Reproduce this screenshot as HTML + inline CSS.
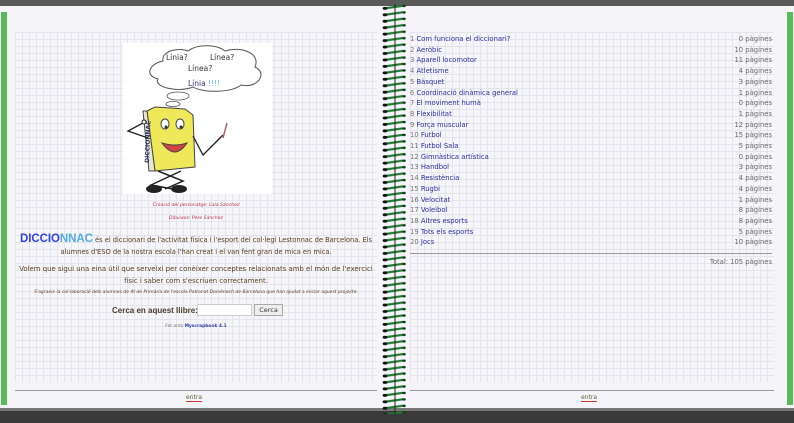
<!DOCTYPE html>
<html><head><meta charset="utf-8"><style>
*{margin:0;padding:0;box-sizing:border-box}
body{width:794px;height:423px;overflow:hidden;background:#f5f5f9;position:relative;font-family:"DejaVu Sans","Liberation Sans",sans-serif}
.abs{position:absolute}
.grid{background-color:#f6f6fa;background-image:linear-gradient(#e4e4ec 1px,transparent 1px),linear-gradient(90deg,#e4e4ec 1px,transparent 1px);background-size:7px 7px}
.row{position:absolute;left:410px;width:362px;font-size:6.8px;height:10px;line-height:10px}
.row a{color:#2e2e9a;text-decoration:none}
.row span.n{color:#777}
.row .p{position:absolute;right:0;color:#6a6a6a}
</style></head><body>
<div class="abs" style="left:0;top:0;width:794px;height:6px;background:#5a5a5a"></div>
<div class="abs" style="left:0;top:410px;width:794px;height:13px;background:#3a3a3a"></div>
<div class="abs" style="left:0;top:408px;width:794px;height:3px;background:#777"></div>
<div class="abs" style="left:1px;top:12px;width:6px;height:393px;background:#5cb85c"></div>
<div class="abs" style="left:787px;top:12px;width:6px;height:393px;background:#5cb85c"></div>
<div class="abs grid" style="left:15px;top:32px;width:362px;height:350px"></div>
<div class="abs grid" style="left:410px;top:32px;width:364px;height:350px"></div>
<div class="abs" style="left:15px;top:390px;width:362px;height:1px;background:#999"></div>
<div class="abs" style="left:410px;top:390px;width:364px;height:1px;background:#999"></div>
<div class="abs" style="left:186px;top:394px;font-size:6px;color:#5a5a30;border-bottom:1px solid #c33">entra</div>
<div class="abs" style="left:581px;top:394px;font-size:6px;color:#5a5a30;border-bottom:1px solid #c33">entra</div>

<!-- image -->
<div class="abs" style="left:123px;top:43px;width:149px;height:151px;background:#fff;overflow:hidden">
<svg width="149" height="151" viewBox="0 0 149 151">
<path d="M40 18 C38 8 55 4 65 8 C75 0 95 2 102 8 C118 3 138 10 132 24 C145 30 135 46 118 42 C108 50 80 50 70 44 C55 50 30 44 35 36 C20 32 28 20 40 18Z" fill="#fff" stroke="#555" stroke-width="1"/>
<ellipse cx="55" cy="53" rx="11" ry="4" fill="#fff" stroke="#555" stroke-width="0.8"/>
<ellipse cx="50" cy="61" rx="7" ry="2.6" fill="#fff" stroke="#555" stroke-width="0.8"/>
<text x="43" y="17" font-size="7.5" fill="#333" font-family="DejaVu Sans">Línia?</text>
<text x="87" y="17" font-size="7.5" fill="#333" font-family="DejaVu Sans">Línea?</text>
<text x="65" y="28" font-size="7.5" fill="#333" font-family="DejaVu Sans">Línea?</text>
<text x="65" y="43" font-size="7.5" fill="#336" font-family="DejaVu Sans">Línia <tspan fill="#6bc">!!!!</tspan></text>
<path d="M24 68 L32 64 L62 66 L70 72 L72 124 L32 128Z" fill="#eee85a" stroke="#444"/>
<path d="M20 68 L24 68 L32 128 L26 128Z" fill="#e8e8d0" stroke="#444"/>
<text x="26" y="120" font-size="6" fill="#336" transform="rotate(-88 26 120)" font-family="DejaVu Sans" font-weight="bold">DICCIONNAC</text>
<ellipse cx="42" cy="81" rx="4" ry="5" fill="#fff" stroke="#444"/><ellipse cx="57" cy="81" rx="4" ry="5" fill="#fff" stroke="#444"/>
<circle cx="43" cy="84" r="1.5" fill="#333"/><circle cx="58" cy="84" r="1.5" fill="#333"/>
<path d="M39 100 Q52 118 64 100 Q52 104 39 100Z" fill="#c44" stroke="#444"/>
<path d="M20 80 L5 88 L25 95" fill="none" stroke="#222" stroke-width="1.3"/>
<circle cx="21" cy="79" r="2" fill="#fff" stroke="#222"/>
<path d="M70 93 L80 112 L100 92" fill="none" stroke="#222" stroke-width="1.3"/>
<path d="M104 80 L100 95" stroke="#a66" stroke-width="1.5"/>
<path d="M35 128 L60 138 L42 146 M58 128 L28 142 L50 146" fill="none" stroke="#222" stroke-width="1.5"/>
<ellipse cx="31" cy="146" rx="8" ry="4" fill="#222"/><ellipse cx="56" cy="146" rx="8" ry="4" fill="#222"/>
</svg></div>
<div class="abs" style="left:15px;top:203px;width:362px;text-align:center;font-size:4.6px;color:#b03050;font-style:italic">Creació del personatge: Laia Sánchez</div>
<div class="abs" style="left:15px;top:216px;width:362px;text-align:center;font-size:4.6px;color:#b03050;font-style:italic">Dibuixos: Pere Sánchez</div>
<div class="abs" style="left:13px;top:233px;width:366px;text-align:center;font-size:6.75px;color:#5a4020;line-height:12px;letter-spacing:-0.05px"><b style="font-size:11.5px;color:#3344cc;font-family:'Liberation Sans',sans-serif">DICCIO<span style="color:#55aadd">NNAC</span></b> és el diccionari de l'activitat física i l'esport del col·legi Lestonnac de Barcelona. Els alumnes d'ESO de la nostra escola l'han creat i el van fent gran de mica en mica.</div>
<div class="abs" style="left:13px;top:263px;width:366px;text-align:center;font-size:6.9px;color:#5a4020;line-height:12px">Volem que sigui una eina útil que serveixi per conèixer conceptes relacionats amb el món de l'exercici físic i saber com s'escriuen correctament.</div>
<div class="abs" style="left:15px;top:290px;width:362px;text-align:center;font-size:4.5px;color:#5a4020;font-style:italic">S'agraeix la col·laboració dels alumnes de 4t de Primària de l'escola Patronat Domènech de Barcelona que han ajudat a iniciar aquest projecte.</div>
<div class="abs" style="left:112px;top:305px;font-size:8px;font-weight:bold;color:#4a3a2a;font-family:'Liberation Sans',sans-serif;line-height:12px">Cerca en aquest llibre:</div>
<div class="abs" style="left:197px;top:304px;width:55px;height:12px;background:#fff;border:1px solid #ccc"></div>
<div class="abs" style="left:254px;top:304px;width:29px;height:12px;background:#eee;border:1px solid #aaa;font-size:6.5px;text-align:center;line-height:10px;color:#333">Cerca</div>
<div class="abs" style="left:15px;top:324px;width:362px;text-align:center;font-size:4.4px;color:#777">Fet amb <b style="color:#3344aa">Myscrapbook 4.1</b></div>

<!-- spiral -->
<svg class="abs" style="left:380px;top:4px" width="30" height="410">
<defs><pattern id="sp" width="30" height="6.45" patternUnits="userSpaceOnUse">
<path d="M4 4.5 L23 1.8" stroke="#1f7a30" stroke-width="2.2"/>
<ellipse cx="5" cy="4.3" rx="2.4" ry="1.5" fill="#111"/>
<ellipse cx="24" cy="2" rx="1.8" ry="1.2" fill="#143a1a"/>
</pattern></defs>
<rect x="0" y="0" width="30" height="410" fill="url(#sp)"/>
<rect x="14.5" y="0" width="1" height="410" fill="#222"/>
</svg>

<div class="row" style="top:34px"><span class="n">1 </span><a>Com funciona el diccionari?</a><span class="p">0 pàgines</span></div>
<div class="row" style="top:44.7px"><span class="n">2 </span><a>Aeròbic</a><span class="p">10 pàgines</span></div>
<div class="row" style="top:55.4px"><span class="n">3 </span><a>Aparell locomotor</a><span class="p">11 pàgines</span></div>
<div class="row" style="top:66.1px"><span class="n">4 </span><a>Atletisme</a><span class="p">4 pàgines</span></div>
<div class="row" style="top:76.8px"><span class="n">5 </span><a>Bàsquet</a><span class="p">3 pàgines</span></div>
<div class="row" style="top:87.5px"><span class="n">6 </span><a>Coordinació dinàmica general</a><span class="p">1 pàgines</span></div>
<div class="row" style="top:98.2px"><span class="n">7 </span><a>El moviment humà</a><span class="p">0 pàgines</span></div>
<div class="row" style="top:108.9px"><span class="n">8 </span><a>Flexibilitat</a><span class="p">1 pàgines</span></div>
<div class="row" style="top:119.6px"><span class="n">9 </span><a>Força muscular</a><span class="p">12 pàgines</span></div>
<div class="row" style="top:130.3px"><span class="n">10 </span><a>Futbol</a><span class="p">15 pàgines</span></div>
<div class="row" style="top:141px"><span class="n">11 </span><a>Futbol Sala</a><span class="p">5 pàgines</span></div>
<div class="row" style="top:151.7px"><span class="n">12 </span><a>Gimnàstica artística</a><span class="p">0 pàgines</span></div>
<div class="row" style="top:162.4px"><span class="n">13 </span><a>Handbol</a><span class="p">3 pàgines</span></div>
<div class="row" style="top:173.1px"><span class="n">14 </span><a>Resistència</a><span class="p">4 pàgines</span></div>
<div class="row" style="top:183.8px"><span class="n">15 </span><a>Rugbi</a><span class="p">4 pàgines</span></div>
<div class="row" style="top:194.5px"><span class="n">16 </span><a>Velocitat</a><span class="p">1 pàgines</span></div>
<div class="row" style="top:205.2px"><span class="n">17 </span><a>Voleibol</a><span class="p">8 pàgines</span></div>
<div class="row" style="top:215.9px"><span class="n">18 </span><a>Altres esports</a><span class="p">8 pàgines</span></div>
<div class="row" style="top:226.6px"><span class="n">19 </span><a>Tots els esports</a><span class="p">5 pàgines</span></div>
<div class="row" style="top:237.3px"><span class="n">20 </span><a>Jocs</a><span class="p">10 pàgines</span></div>
<div class="abs" style="left:410px;top:253px;width:362px;height:1px;background:#999"></div>
<div class="row" style="top:257px"><span class="p">Total: 105 pàgines</span></div>
</body></html>
